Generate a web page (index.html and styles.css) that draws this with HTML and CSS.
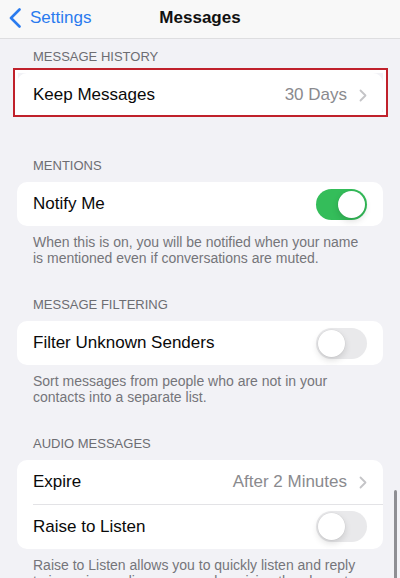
FILE: index.html
```html
<!DOCTYPE html>
<html lang="en">
<head>
<meta charset="utf-8">
<title>Messages</title>
<link rel="stylesheet" href="styles.css">
</head>
<body>
<div class="screen">
  <header class="nav">
    <a class="back" href="#">
      <svg class="back-icon" width="14" height="20" viewBox="0 0 14 20" aria-hidden="true">
        <path d="M11.5 1.5 L3 10 L11.5 18.5" fill="none" stroke="#2a7bef" stroke-width="2.6" stroke-linecap="round" stroke-linejoin="round"/>
      </svg>
      <span>Settings</span>
    </a>
    <h1 class="title">Messages</h1>
    <span class="nav-spacer"></span>
  </header>

  <main class="content">
    <section class="group group-plain">
      <h2 class="group-header">Message History</h2>
      <div class="card card-highlight">
        <div class="row">
          <span class="row-label">Keep Messages</span>
          <span class="row-value">30 Days</span>
          <svg class="chevron" width="8" height="13" viewBox="0 0 8 13" aria-hidden="true">
            <path d="M1.5 1.5 L6.5 6.5 L1.5 11.5" fill="none" stroke="#c4c4c7" stroke-width="1.8" stroke-linecap="round" stroke-linejoin="round"/>
          </svg>
        </div>
      </div>
    </section>

    <section class="group">
      <h2 class="group-header">Mentions</h2>
      <div class="card">
        <div class="row">
          <span class="row-label">Notify Me</span>
          <span class="toggle toggle-on"><span class="knob"></span></span>
        </div>
      </div>
      <p class="group-footer">When this is on, you will be notified when your name is mentioned even if conversations are muted.</p>
    </section>

    <section class="group">
      <h2 class="group-header">Message Filtering</h2>
      <div class="card">
        <div class="row">
          <span class="row-label">Filter Unknown Senders</span>
          <span class="toggle"><span class="knob"></span></span>
        </div>
      </div>
      <p class="group-footer">Sort messages from people who are not in your contacts into a separate list.</p>
    </section>

    <section class="group">
      <h2 class="group-header">Audio Messages</h2>
      <div class="card">
        <div class="row">
          <span class="row-label">Expire</span>
          <span class="row-value">After 2 Minutes</span>
          <svg class="chevron" width="8" height="13" viewBox="0 0 8 13" aria-hidden="true">
            <path d="M1.5 1.5 L6.5 6.5 L1.5 11.5" fill="none" stroke="#c4c4c7" stroke-width="1.8" stroke-linecap="round" stroke-linejoin="round"/>
          </svg>
        </div>
        <div class="row row-sep">
          <span class="row-label">Raise to Listen</span>
          <span class="toggle"><span class="knob"></span></span>
        </div>
      </div>
      <p class="group-footer">Raise to Listen allows you to quickly listen and reply to incoming audio messages by raising the phone to your ear.</p>
    </section>
  </main>

  <div class="scrollbar"></div>
</div>
</body>
</html>
```

FILE: styles.css
```css
* { box-sizing: border-box; }

html, body {
  margin: 0;
  padding: 0;
  background: #f2f2f6;
}

body {
  font-family: "Liberation Sans", Arial, sans-serif;
  color: #000;
  -webkit-font-smoothing: antialiased;
}

.screen {
  position: relative;
  width: 400px;
  height: 578px;
  overflow: hidden;
  background: #f2f2f6;
}

/* Navigation bar */
.nav {
  display: grid;
  grid-template-columns: 1fr auto 1fr;
  align-items: center;
  height: 39px;
  padding-bottom: 3px;
  background: #f8f8f8;
  border-bottom: 1px solid #dedee0;
}

.back {
  display: flex;
  align-items: center;
  gap: 8px;
  padding-left: 8px;
  color: #2a7bef;
  text-decoration: none;
  font-size: 17px;
}

.back-icon { display: block; }

.title {
  margin: 0;
  font-size: 17px;
  font-weight: 700;
  color: #111;
}

/* Content */
.content {
  padding: 9px 17px 0;
}

.group { margin-bottom: 30px; }
.group-plain { margin-bottom: 40px; }

.group-header {
  margin: 0 0 7px;
  padding-left: 16px;
  font-size: 13px;
  font-weight: 400;
  line-height: 18px;
  text-transform: uppercase;
  color: #6d6d72;
}

.card {
  position: relative;
  background: #fff;
  border-radius: 10px;
}

.card-highlight::after {
  content: "";
  position: absolute;
  top: -5px;
  left: -4px;
  right: -5px;
  bottom: 0;
  border: 2px solid #c0212b;
  box-shadow: inset 0 0 0 3px #fff;
  pointer-events: none;
}

.row {
  position: relative;
  display: flex;
  align-items: center;
  height: 44px;
  padding: 0 16px;
}

.row-sep { height: 45px; }

.row-sep::before {
  content: "";
  position: absolute;
  top: 0;
  left: 16px;
  right: 0;
  border-top: 1px solid #e3e3e6;
}

.row-label {
  flex: 1;
  font-size: 17px;
  color: #0a0a0a;
}

.row-value {
  font-size: 17px;
  color: #8a8a8e;
  margin-right: 12px;
}

.chevron { display: block; }

/* Toggle switch */
.toggle {
  position: relative;
  display: block;
  width: 51px;
  height: 31px;
  border-radius: 16px;
  background: #e9e9eb;
}

.toggle .knob {
  position: absolute;
  top: 2px;
  left: 2px;
  width: 27px;
  height: 27px;
  border-radius: 50%;
  background: #fff;
  box-shadow: 0 3px 7px rgba(0, 0, 0, 0.14), 0 0 0 0.5px rgba(0, 0, 0, 0.05);
}

.toggle-on { background: #34bd5a; }
.toggle-on .knob { left: 22px; }

.group-footer {
  margin: 0;
  padding: 8px 20px 0 16px;
  font-size: 14px;
  line-height: 16px;
  color: #75757a;
}

.scrollbar {
  position: absolute;
  right: 3px;
  top: 490px;
  bottom: 0;
  width: 3px;
  border-radius: 2px 2px 0 0;
  background: #8e8e93;
}
```
